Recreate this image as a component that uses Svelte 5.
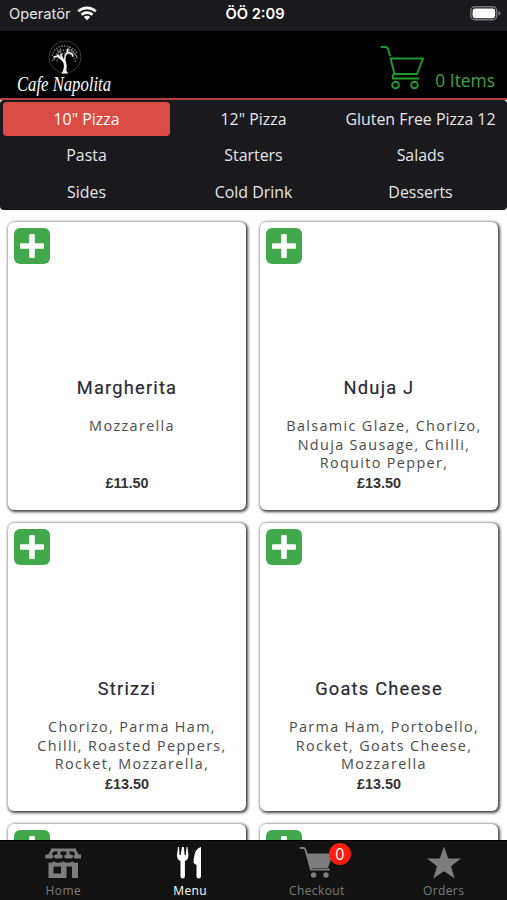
<script lang="ts">
  interface MenuItem {
    name: string;
    toppings: string[];
    price: string;
  }

  const categories = [
    '10" Pizza',
    '12" Pizza',
    'Gluten Free Pizza 12',
    'Pasta',
    'Starters',
    'Salads',
    'Sides',
    'Cold Drink',
    'Desserts',
  ];

  const items: MenuItem[] = [
    { name: 'Margherita', toppings: ['Mozzarella'], price: '£11.50' },
    { name: 'Nduja J', toppings: ['Balsamic Glaze, Chorizo,', 'Nduja Sausage, Chilli,', 'Roquito Pepper,'], price: '£13.50' },
    { name: 'Strizzi', toppings: ['Chorizo, Parma Ham,', 'Chilli, Roasted Peppers,', 'Rocket, Mozzarella,'], price: '£13.50' },
    { name: 'Goats Cheese', toppings: ['Parma Ham, Portobello,', 'Rocket, Goats Cheese,', 'Mozzarella'], price: '£13.50' },
    { name: '', toppings: [], price: '' },
    { name: '', toppings: [], price: '' },
  ];

  let category = $state('10" Pizza');
  let tab = $state('Menu');
  let count = $state(0);
</script>

<div class="app">
  <div class="status">
    <div class="carrier">
      <span>Operatör</span>
      <svg width="20" height="15" viewBox="0 0 20 15" fill="none" stroke="#fff" stroke-width="2.7">
        <path d="M1.2 5.3C6.3 .6 13.7.6 18.8 5.3" />
        <path d="M4.5 8.8C7.6 6 12.4 6 15.5 8.8" />
        <path d="M10 14.3 6.8 11.1Q10 8.5 13.2 11.1Z" fill="#fff" stroke="none" />
      </svg>
    </div>
    <div class="clock">ÖÖ 2:09</div>
    <div class="battery">
      <svg width="31" height="15" viewBox="0 0 31 15">
        <rect x=".8" y=".8" width="26" height="13" rx="4" fill="none" stroke="#77777b" stroke-width="1.4" />
        <rect x="2.6" y="2.6" width="22.6" height="9.6" rx="2.4" fill="#fff" />
        <path d="M28.5 5Q30.5 5.6 30.5 7.4T28.5 9.8Z" fill="#77777b" />
      </svg>
    </div>
  </div>

  <header>
    <svg class="logo" width="110" height="58" viewBox="0 0 110 58">
      <circle cx="53" cy="17" r="16" fill="none" stroke="#3b3b3b" stroke-width="1" />
      <g fill="none" stroke="#777" stroke-width="1.5" stroke-dasharray="1.5 1.3">
        <path d="M40 16Q43 6 52 6T66 14M42 20Q44 10 54 10T65 20M45 21Q49 12 55 13T64 23M40 21 46 15 49 8M57 7 62 13 66 18M45 10 53 15 61 9" />
      </g>
      <g fill="none" stroke="#f2f2f2" stroke-linecap="round">
        <path d="M52 32Q55 24 51 20L46 16" stroke-width="2.6" />
        <path d="M53 23Q52 16 55 13Q60 12 61 16M46 16 42 17M51 20 49 14M55 13 56 9" stroke-width="1.5" />
      </g>
      <path d="M49 33.5Q53 30 52 25H54.5Q53.5 30 56 33.5Z" fill="#f2f2f2" />
      <text x="5" y="51" textLength="94" lengthAdjust="spacingAndGlyphs">Cafe Napolita</text>
    </svg>
    <div class="basket">
      <svg width="46" height="46" viewBox="0 0 46 46" fill="none" stroke="#229a2b" stroke-width="1.9" stroke-linecap="round" stroke-linejoin="round">
        <path d="M1.5 2H5Q7.5 2 8.2 4.5L10 10.5" />
        <path d="M10.5 13.5H43L37 29H14.5Z" />
        <path d="M14.5 29Q11.5 30.5 13 33.5H38.5" />
        <circle cx="15.5" cy="40" r="3.3" />
        <circle cx="34.5" cy="40" r="3.3" />
      </svg>
      <span>{count} Items</span>
    </div>
  </header>

  <nav class="categories">
    {#each categories as c}
      <button class:active={c === category} onclick={() => (category = c)}>{c}</button>
    {/each}
  </nav>

  <main>
    {#each items as item}
      <article>
        <button class="add" aria-label="Add" onclick={() => count++}>
          <svg width="36" height="36" viewBox="0 0 36 36">
            <rect width="36" height="36" rx="6" fill="#41a94b" />
            <rect x="15.2" y="6" width="5.6" height="24" rx="1" fill="#fff" />
            <rect x="6" y="15.2" width="24" height="5.6" rx="1" fill="#fff" />
          </svg>
        </button>
        <h2>{item.name}</h2>
        <p class="toppings">
          {#each item.toppings as line}<span>{line}</span>{/each}
        </p>
        <p class="price">{item.price}</p>
      </article>
    {/each}
  </main>

  <nav class="tabs">
    <button class:active={tab === 'Home'} onclick={() => (tab = 'Home')}>
      <svg width="36" height="34" viewBox="0 0 36 34" fill="none" stroke="currentColor">
        <path d="M6 4H31" stroke-width="3" />
        <path d="M7.5 4 3.5 11.5M14.5 4 13.3 11M22.5 4 23.7 11M29.5 4 33.5 11.5" stroke-width="3" />
        <path d="M1.8 10.5H6.5M11 10.5H15.8M21.2 10.5H26M30.5 10.5H35.2" stroke-width="4" stroke-linecap="round" />
        <path d="M3.5 16.5Q6 17.5 9 15.5 13 18 18.2 15.5 23 18 27.500 15.500 30 17.5 33 16.5V32H27V20.500H21.500V32H3.500ZM8.500 20.500V27.500H16V20.500Z" fill="currentColor" fill-rule="evenodd" stroke="none" />
      </svg>
      <span>Home</span>
    </button>
    <button class:active={tab === 'Menu'} onclick={() => (tab = 'Menu')}>
      <svg width="36" height="34" viewBox="0 0 36 34" fill="currentColor">
        <path d="M6 1 5 9Q5 14 8.500 15V30.500Q8.500 32.500 10.700 32.500T12.900 30.500V15Q16.400 14 16.400 9L15.400 1H14.500L13.800 9H12.700L11.800 1H9.800L8.800 9H7.600L7 1Z" />
        <path d="M29 1Q23 2 21.600 13.500V17L24.500 19V30.500Q24.500 32.500 26.700 32.500T29 30.500Z" />
      </svg>
      <span>Menu</span>
    </button>
    <button class:active={tab === 'Checkout'} onclick={() => (tab = 'Checkout')}>
      <div class="badged">
        <svg width="36" height="34" viewBox="0 0 36 34" fill="currentColor">
          <path d="M1.500 2H4.500Q6 2 6.600 4L12 23.500H30" fill="none" stroke="currentColor" stroke-width="2" stroke-linecap="round" />
          <path d="M6.800 7.500H34L29.500 20.500Q29 22 27.500 22H12Z" />
          <circle cx="14.6" cy="29" r="2.7" />
          <circle cx="27" cy="29" r="2.7" />
        </svg>
        <span class="badge">{count}</span>
      </div>
      <span>Checkout</span>
    </button>
    <button class:active={tab === 'Orders'} onclick={() => (tab = 'Orders')}>
      <svg width="36" height="34" viewBox="0 0 36 34" fill="currentColor">
        <path d="M18 .5 22.200 12.500H35L25 20.200 28.700 32.500 18 25.200 7.300 32.500 11 20.200 1 12.500H13.800Z" />
      </svg>
      <span>Orders</span>
    </button>
  </nav>
</div>

<style>
  :global(body) {
    background: #fff;
  }

  .app {
    height: 900px;
    display: flex;
    flex-direction: column;
    overflow: hidden;
    font-family: "Open Sans", "Noto Sans", sans-serif;
  }

  button {
    border: 0;
    padding: 0;
    background: none;
    font: inherit;
    letter-spacing: inherit;
    color: inherit;
  }

  svg {
    display: block;
    flex: none;
  }

  /* status bar */
  .status {
    height: 31px;
    flex: none;
    box-sizing: border-box;
    padding: 0 6px 4px 9px;
    display: grid;
    grid-template-columns: 1fr auto 1fr;
    align-items: center;
    background: #1b1a1f;
    color: #fff;
    font-family: Inter, sans-serif;
    font-size: 14.7px;
  }

  .carrier {
    display: flex;
    gap: 6px;
    align-items: center;
    color: #e6e6e8;
  }

  .clock {
    font-weight: 600;
  }

  .battery {
    justify-self: end;
  }

  /* header */
  header {
    height: 69px;
    flex: none;
    box-sizing: border-box;
    padding: 9px 12px 0;
    display: flex;
    justify-content: space-between;
    background: #000;
    border-bottom: 2px solid #b5403d;
  }

  .logo {
    overflow: visible;
  }

  .logo text {
    fill: #fff;
    font-family: "Liberation Serif", serif;
    font-style: italic;
    font-size: 20px;
  }

  .basket {
    display: flex;
    gap: 9px;
    padding-top: 5px;
    color: #43a047;
    font-size: 17.4px;
  }

  .basket span {
    margin-top: 23px;
  }

  /* category grid */
  .categories {
    height: 110px;
    flex: none;
    box-sizing: border-box;
    padding: 2px 0 0;
    display: grid;
    grid-template-columns: repeat(3, 167px);
    grid-auto-rows: 34px;
    gap: 2.5px 0;
    justify-content: center;
    background: #1a191e;
    border-radius: 4px;
    color: #e6e6e8;
    font-size: 15.9px;
  }

  .categories button {
    border-radius: 4px;
    padding-bottom: 1px;
    white-space: nowrap;
  }

  .categories .active {
    background: #dc4c47;
    color: #fff;
  }

  /* menu cards */
  main {
    flex: 1;
    min-height: 0;
    overflow: hidden;
    padding: 12px 8px 0;
    display: grid;
    grid-template-columns: 238px 238px;
    grid-auto-rows: 288px;
    gap: 13px 14px;
  }

  article {
    box-sizing: border-box;
    padding: 6px;
    display: flex;
    flex-direction: column;
    align-items: center;
    background: #fff;
    border-radius: 6px;
    box-shadow: 1px 1px 3px 1px rgba(0, 0, 0, 0.75);
  }

  .add {
    align-self: flex-start;
  }

  h2 {
    height: 24px;
    margin: 111.5px 0 0;
    font: 400 18.3px/24px Roboto, sans-serif;
    letter-spacing: 1.2px;
    color: #2b2a38;
    -webkit-text-stroke: 0.2px #2b2a38;
  }

  .toppings {
    height: 56px;
    margin: 17.5px 0 0 10px;
    display: flex;
    flex-direction: column;
    align-items: center;
    font-size: 14.4px;
    line-height: 18.5px;
    letter-spacing: 1.35px;
    color: #4c4c4c;
    white-space: nowrap;
  }

  .price {
    margin: 0;
    font: bold 14.4px/20px "Liberation Sans", sans-serif;
    color: #333;
  }

  /* bottom tab bar */
  .tabs {
    height: 60px;
    flex: none;
    box-sizing: border-box;
    padding-top: 5px;
    display: grid;
    grid-template-columns: repeat(4, 1fr);
    background: #121212;
    border-top: 1px solid #000;
    color: #7d7d7d;
    font-size: 12px;
    font-weight: 500;
    letter-spacing: 0.4px;
  }

  .tabs button {
    display: flex;
    flex-direction: column;
    align-items: center;
    gap: 2px;
  }

  .tabs .active {
    color: #fff;
  }

  .badged {
    position: relative;
  }

  .badge {
    position: absolute;
    top: -3px;
    left: 30px;
    width: 22px;
    height: 22px;
    border-radius: 50%;
    background: #fc1d0c;
    color: #fff;
    font-size: 16px;
    line-height: 22px;
    letter-spacing: 0;
    text-align: center;
  }
</style>
